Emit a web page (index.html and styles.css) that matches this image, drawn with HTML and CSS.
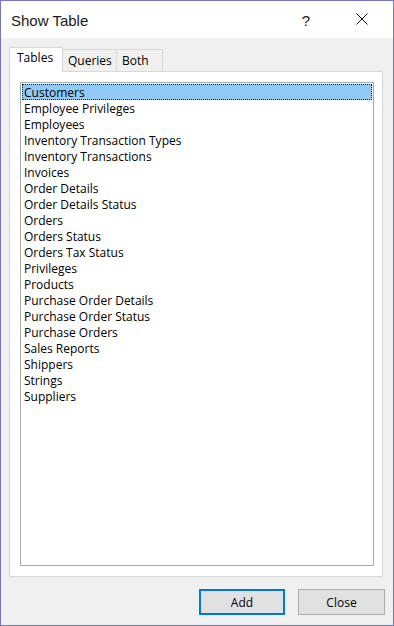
FILE: index.html
```html
<!DOCTYPE html>
<html lang="en">
<head>
    <meta charset="UTF-8">
    <title>Show Table</title>
    <link rel="stylesheet" href="styles.css">
</head>
<body>
    <div class="window">
        <div class="titlebar">
            <span class="title">Show Table</span>
            <span class="help">?</span>
            <span class="close-x">
                <svg width="12" height="12" viewBox="0 0 12 12">
                    <path d="M0.5 0.5 L11.5 11.5 M11.5 0.5 L0.5 11.5" stroke="#111" stroke-width="1" fill="none"/>
                </svg>
            </span>
        </div>

        <div class="content">
            <div class="tabs">
                <div class="tab active">Tables</div>
                <div class="tab queries">Queries</div>
                <div class="tab both">Both</div>
            </div>

            <div class="panel">
                <ul class="listbox">
                    <li class="selected">Customers</li>
                    <li>Employee Privileges</li>
                    <li>Employees</li>
                    <li>Inventory Transaction Types</li>
                    <li>Inventory Transactions</li>
                    <li>Invoices</li>
                    <li>Order Details</li>
                    <li>Order Details Status</li>
                    <li>Orders</li>
                    <li>Orders Status</li>
                    <li>Orders Tax Status</li>
                    <li>Privileges</li>
                    <li>Products</li>
                    <li>Purchase Order Details</li>
                    <li>Purchase Order Status</li>
                    <li>Purchase Orders</li>
                    <li>Sales Reports</li>
                    <li>Shippers</li>
                    <li>Strings</li>
                    <li>Suppliers</li>
                </ul>
            </div>

            <div class="buttons">
                <button class="btn default">Add</button>
                <button class="btn close">Close</button>
            </div>
        </div>
    </div>
</body>
</html>
```

FILE: styles.css
```css
body {
    margin: 0;
    padding: 0;
    font-family: "Open Sans", "Liberation Sans", Arial, sans-serif;
    font-size: 12px;
    color: #000;
}

.window {
    width: 394px;
    height: 626px;
    box-sizing: border-box;
    border: 1px solid #7474c8;
    display: flex;
    flex-direction: column;
    background-color: #f0f0f0;
}

.titlebar {
    height: 37px;
    background-color: #fff;
    display: flex;
    align-items: center;
    flex-shrink: 0;
}

.title {
    font-family: "Liberation Sans", Arial, sans-serif;
    font-size: 15px;
    color: #1a1a1a;
    margin-left: 10px;
    margin-right: auto;
    padding-top: 2px;
}

.help {
    font-family: "Liberation Sans", Arial, sans-serif;
    font-size: 15px;
    color: #1a1a1a;
    margin-right: 46px;
    padding-top: 2px;
}

.close-x {
    display: flex;
    margin-right: 25px;
    padding-bottom: 1px;
}

.content {
    flex: 1;
    display: flex;
    flex-direction: column;
    padding: 9px 10px 10px 8px;
}

.tabs {
    display: flex;
    align-items: flex-end;
    height: 24px;
}

.tab {
    height: 22px;
    box-sizing: border-box;
    border: 1px solid #d9d9d9;
    border-bottom: none;
    border-left: none;
    background-color: #f0f0f0;
    padding: 2px 0 0 5px;
    line-height: 18px;
}

.tab.active {
    position: relative;
    height: 25px;
    margin-bottom: -1px;
    border-left: 1px solid #d9d9d9;
    background-color: #fff;
    padding: 1px 0 0 7px;
    width: 54px;
}

.tab.queries {
    width: 54px;
}

.tab.both {
    width: 46px;
}

.panel {
    flex: 1;
    border: 1px solid #d9d9d9;
    background-color: #fff;
    padding: 10px 8px 10px 10px;
    display: flex;
}

.listbox {
    flex: 1;
    list-style: none;
    margin: 0;
    padding: 1px;
    border: 1px solid #a9a9a9;
    background-color: #fff;
}

.listbox li {
    height: 16px;
    line-height: 16px;
    padding: 1px 0 0 2px;
    box-sizing: border-box;
    white-space: nowrap;
}

.listbox li.selected {
    background-color: #91c9f7;
    outline: 1px dotted #222;
    outline-offset: -1px;
}

.buttons {
    display: flex;
    justify-content: flex-end;
    gap: 13px;
    margin-top: 12px;
}

.btn {
    height: 26px;
    font-family: "Open Sans", "Liberation Sans", Arial, sans-serif;
    font-size: 12px;
    color: #000;
    background-color: #e1e1e1;
    border: 1px solid #adadad;
    padding: 0;
}

.btn.default {
    width: 86px;
    border: 2px solid #0078d7;
}

.btn.close {
    width: 87px;
    margin-right: -2px;
}
```
